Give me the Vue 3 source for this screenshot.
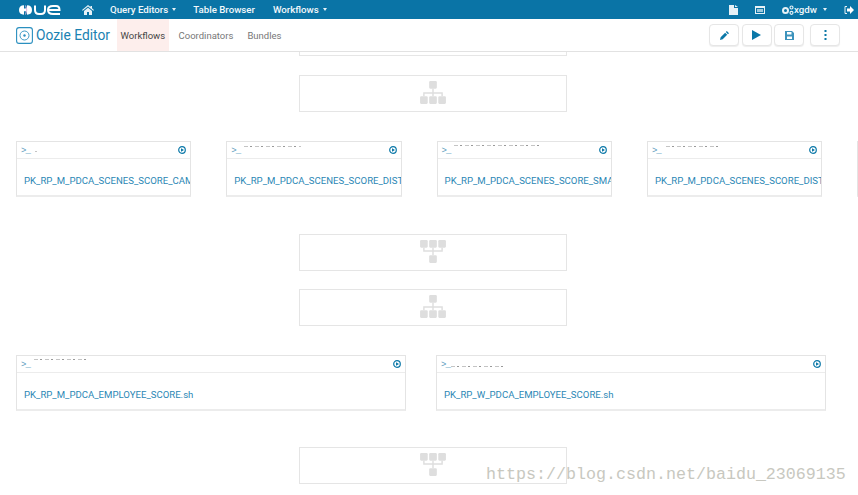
<script setup>
const topLeft = ['Query Editors', 'Table Browser', 'Workflows']
const row1 = [
  { name: 'PK_RP_M_PDCA_SCENES_SCORE_CAMPAIGN.sh', smudge: 2, offset: 18, top: 9 },
  { name: 'PK_RP_M_PDCA_SCENES_SCORE_DISTRICT.sh', smudge: 57, offset: 17, top: 4 },
  { name: 'PK_RP_M_PDCA_SCENES_SCORE_SMALL.sh', smudge: 85, offset: 16, top: 3 },
  { name: 'PK_RP_M_PDCA_SCENES_SCORE_DISTRICT.sh', smudge: 55, offset: 18, top: 4 },
  { name: '', smudge: 0, offset: 0, top: 0 }
]
const row2 = [
  { name: 'PK_RP_M_PDCA_EMPLOYEE_SCORE.sh', smudge: 52, offset: 17, top: 3 },
  { name: 'PK_RP_W_PDCA_EMPLOYEE_SCORE.sh', smudge: 55, offset: 14, top: 10 }
]
</script>

<template>
  <div class="page">
    <nav class="nav">
      <svg class="logo" viewBox="0 0 42 10" width="42" height="10">
        <path fill="#fff" d="M5 0.300v3.300h2V6.200H5v3.500Q0 9.500 0 5T5 .3z" />
        <path fill="#fff" d="M8 0.300v3.300H6.500V6.200H8v3.500q5-.2 5-4.700T8 .3z" />
        <path d="M6.600.5q2.400 4.500 0 9" fill="none" stroke="#e3b4dc" stroke-width="1" />
        <g fill="none" stroke="#fff" stroke-width="2">
          <path d="M16 .5V5q0 4 4 4h2q4 0 4-4V.5" />
          <path d="M41 9h-7q-5 0-5-4t5-4h3q3.500 0 3.500 4H29.500" />
        </g>
      </svg>
      <svg class="home" viewBox="0 0 12 10" width="12" height="10">
        <path fill="#e6f1f6" d="M6 0 0 5l.7.8L6 1.500l5.300 4.300.7-.8-2-1.700V1H8.500v1L6 0zM2 6v4h3V7h2v3h3V6L6 2.700 2 6z" />
      </svg>
      <a class="nav-item first">{{ topLeft[0] }}<i class="caret"></i></a>
      <a class="nav-item second">{{ topLeft[1] }}</a>
      <a class="nav-item third">{{ topLeft[2] }}<i class="caret"></i></a>
      <div class="nav-right">
        <svg class="doc" viewBox="0 0 9 10" width="9" height="10"><path fill="#e6f1f6" d="M0 0h5v3h4v7H0zM6 0l3 2H6z" /></svg>
        <svg class="cardi" viewBox="0 0 10 8" width="10" height="8"><path fill="#e6f1f6" fill-rule="evenodd" d="M0 0h10v8H0zM1 2v5h8V2z" /><path fill="#9cc8dc" d="M2 3h6v3H2z" /></svg>
        <svg class="cogs" viewBox="0 0 13 10" width="13" height="10">
          <circle cx="4.500" cy="5.500" r="2.500" fill="none" stroke="#e6f1f6" stroke-width="2" />
          <circle cx="10.500" cy="2.500" r="1.500" fill="none" stroke="#e6f1f6" stroke-width="1.200" />
          <circle cx="10.500" cy="7.800" r="1.500" fill="none" stroke="#e6f1f6" stroke-width="1.200" />
        </svg>
        <span class="user">xgdw</span><i class="caret user-caret"></i>
        <svg class="logout" viewBox="0 0 10 8" width="10" height="8"><path fill="none" stroke="#e6f1f6" stroke-width="1" d="M3 .5H1v7h2" /><path fill="#fff" d="M3 2.500h3V0l4 4-4 4V5.500H3z" /></svg>
      </div>
    </nav>

    <header class="sub">
      <svg class="ozi" viewBox="0 0 17 17" width="17" height="17">
        <rect x=".6" y=".6" width="15.800" height="15.800" rx="2.500" fill="none" stroke="#2a8fbf" stroke-width="1.100" />
        <circle cx="8.500" cy="8.500" r="4.500" fill="none" stroke="#2a8fbf" stroke-width=".9" />
        <circle cx="8.500" cy="8.500" r="1.200" fill="#2a8fbf" />
      </svg>
      <span class="brand">Oozie Editor</span>
      <a class="tab active">Workflows</a>
      <a class="tab coord">Coordinators</a>
      <a class="tab">Bundles</a>
      <div class="actions">
        <button class="btn">
          <svg viewBox="0 0 10 10" width="9" height="9"><path fill="#0b78a8" d="M0 10l.7-3 5-5L8 4.300l-5 5zM6.500 1.200 7.600 0 10 2.400 8.800 3.500z" /></svg>
        </button>
        <button class="btn">
          <svg viewBox="0 0 9 10" width="9" height="10"><path fill="#0b78a8" d="M0 0l9 5-9 5z" /></svg>
        </button>
        <button class="btn">
          <svg viewBox="0 0 9 9" width="9" height="9"><path fill="#3d93bc" fill-rule="evenodd" d="M0 0h7l2 2v7H0zM2 1v2.500h4.500V1zM2 5.500V8h5V5.500z" /></svg>
        </button>
        <button class="btn more">
          <svg viewBox="0 0 3 10" width="3" height="10"><path fill="#0b78a8" d="M.5 0h2v2h-2zM.5 4h2v2h-2zM.5 8h2v2h-2z" /></svg>
        </button>
      </div>
    </header>

    <main class="canvas">
      <div class="stub"></div>

      <div class="fork f1">
        <svg class="site" viewBox="0 0 28 24" width="28" height="23"><use href="#site-fork" /></svg>
      </div>

      <div class="row four">
        <article v-for="(c, i) in row1" :key="i" class="card">
          <div class="card-head">
            <span class="term">&gt;_</span>
            <i class="smudge" :style="{ width: c.smudge + 'px', left: c.offset + 'px', top: c.top + 'px' }"></i>
            <svg class="run" viewBox="0 0 8 8" width="8" height="8"><circle cx="4" cy="4" r="3.300" fill="none" stroke="#0b78a8" stroke-width="1.200" /><path fill="#0b78a8" d="M3 2.200 6 4 3 5.800z" /></svg>
          </div>
          <div class="card-body"><a class="link">{{ c.name }}</a></div>
        </article>
      </div>

      <div class="fork f2">
        <svg class="site" viewBox="0 0 28 24" width="28" height="23"><use href="#site-join" /></svg>
      </div>
      <div class="fork f3">
        <svg class="site" viewBox="0 0 28 24" width="28" height="23"><use href="#site-fork" /></svg>
      </div>

      <div class="row two">
        <article v-for="(c, i) in row2" :key="i" class="card">
          <div class="card-head">
            <span class="term">&gt;_</span>
            <i class="smudge" :style="{ width: c.smudge + 'px', left: c.offset + 'px', top: c.top + 'px' }"></i>
            <svg class="run" viewBox="0 0 8 8" width="8" height="8"><circle cx="4" cy="4" r="3.300" fill="none" stroke="#0b78a8" stroke-width="1.200" /><path fill="#0b78a8" d="M3 2.200 6 4 3 5.800z" /></svg>
          </div>
          <div class="card-body"><a class="link">{{ c.name }}</a></div>
        </article>
      </div>

      <div class="fork f4">
        <svg class="site" viewBox="0 0 28 24" width="28" height="23"><use href="#site-join" /></svg>
      </div>

      <svg class="defs" width="0" height="0">
        <defs>
          <g id="site-fork">
            <rect x="10" y="0" width="8" height="8" rx="1.200" fill="#dedede" />
            <path d="M14 8v8M4.500 16v-3.500h19V16" fill="none" stroke="#dedede" stroke-width="1.500" />
            <rect x="0.500" y="16" width="8" height="8" rx="1.200" fill="#dedede" />
            <rect x="10" y="16" width="8" height="8" rx="1.200" fill="#dedede" />
            <rect x="19.500" y="16" width="8" height="8" rx="1.200" fill="#dedede" />
          </g>
          <g id="site-join">
            <rect x="0.500" y="0" width="8" height="8" rx="1.200" fill="#dedede" />
            <rect x="10" y="0" width="8" height="8" rx="1.200" fill="#dedede" />
            <rect x="19.500" y="0" width="8" height="8" rx="1.200" fill="#dedede" />
            <path d="M14 8v8M4.500 8v3.500h19V8" fill="none" stroke="#dedede" stroke-width="1.500" />
            <rect x="10" y="16" width="8" height="8" rx="1.200" fill="#dedede" />
          </g>
        </defs>
      </svg>
    </main>

    <div class="watermark">https://blog.csdn.net/baidu_23069135</div>
  </div>
</template>

<style>
html, body { margin: 0; background: #fff; }
</style>

<style scoped>
.page {
  position: relative;
  width: 858px;
  height: 495px;
  overflow: hidden;
  background: #fff;
  font-family: Roboto, "Liberation Sans", sans-serif;
}
.nav {
  display: flex;
  align-items: center;
  height: 19px;
  background: #0a74a6;
  color: #f2f8fb;
  font-size: 9.700px;
  font-weight: 500;
}
.logo { margin-left: 19px; }
.home { margin-left: 21px; }
.nav-item { display: inline-flex; align-items: center; white-space: nowrap; }
.first { margin-left: 16px; }
.second { margin-left: 17px; }
.third { margin-left: 18px; }
.caret {
  display: inline-block;
  margin-left: 4px;
  border-left: 2.500px solid transparent;
  border-right: 2.500px solid transparent;
  border-top: 3px solid #e6f1f6;
}
.nav-right { margin-left: auto; display: flex; align-items: center; padding-right: 4px; }
.cardi { margin-left: 17px; }
.cogs { margin-left: 16px; }
.user { margin-left: 0; }
.user-caret { margin-left: 6px; }
.logout { margin-left: 17px; }

.sub {
  display: flex;
  align-items: stretch;
  height: 32px;
  border-bottom: 1px solid #e2e2e2;
  color: #777;
  font-size: 9.500px;
}
.ozi { align-self: center; margin-left: 16px; }
.brand { align-self: center; margin-left: 3px; width: 81px; font-size: 13.800px; color: #1b82b2; white-space: nowrap; }
.tab { display: flex; align-items: center; padding: 0 3.500px; margin-right: 10px; white-space: nowrap; }
.tab.active { background: #fdeeec; color: #444; margin-right: 6.500px; }
.tab.coord { margin-right: 7px; }
.actions { margin-left: auto; margin-right: 18px; display: flex; align-items: center; gap: 2.500px; }
.btn {
  display: flex;
  align-items: center;
  justify-content: center;
  width: 30px;
  height: 22px;
  padding: 0;
  background: #fff;
  border: 1px solid #e6e6e6;
  border-radius: 4px;
  box-shadow: 0 1px 1px #eee;
}
.btn.more { margin-left: 3.500px; }

.canvas {
  display: flex;
  flex-direction: column;
  height: 443px;
  overflow: hidden;
}
.stub {
  flex: none;
  box-sizing: border-box;
  width: 268px;
  height: 4px;
  margin-left: 299px;
  border: 1px solid #e6e6e6;
  border-top: 0;
}
.fork {
  flex: none;
  box-sizing: border-box;
  display: flex;
  align-items: center;
  justify-content: center;
  width: 268px;
  height: 37px;
  margin-left: 299px;
  padding-bottom: 2px;
  border: 1px solid #e5e5e5;
}
.f1 { margin-top: 19px; }
.f2 { margin-top: 37px; }
.f3 { margin-top: 18px; }
.f4 { margin-top: 36px; }
.row { flex: none; display: flex; margin-top: 29px; padding-left: 16px; }
.four { gap: 35px; }
.two { gap: 30px; }
.four .card { width: 175.300px; }
.two .card { width: 390px; }
.card {
  flex: none;
  box-sizing: border-box;
  height: 56px;
  border: 1px solid #e4e4e4;
  border-bottom: 2px solid #ececec;
  overflow: hidden;
}
.card-head {
  position: relative;
  display: flex;
  align-items: center;
  height: 16px;
  padding: 0 4px;
  border-bottom: 1px solid #ececec;
}
.term { font-family: "Liberation Mono", monospace; font-size: 9px; color: #5a9dbe; letter-spacing: -1px; margin-top: 2px; }
.smudge {
  position: absolute;
  height: 1px;
  background: repeating-linear-gradient(90deg, #c4c4c4 0 4px, #fff 4px 6px, #999 6px 8px, #fff 8px 11px);
}
.run { margin-left: auto; }
.card-body {
  display: flex;
  align-items: center;
  height: 37px;
  padding: 6px 0 0 7px;
  box-sizing: border-box;
  white-space: nowrap;
  font-size: 9.600px;
  color: #2b87b5;
}
.defs { position: absolute; }
.watermark {
  position: absolute;
  left: 486px;
  top: 465px;
  font-family: "Liberation Mono", monospace;
  font-size: 16.670px;
  line-height: 20px;
  color: #c8c8c0;
  white-space: nowrap;
}
</style>
